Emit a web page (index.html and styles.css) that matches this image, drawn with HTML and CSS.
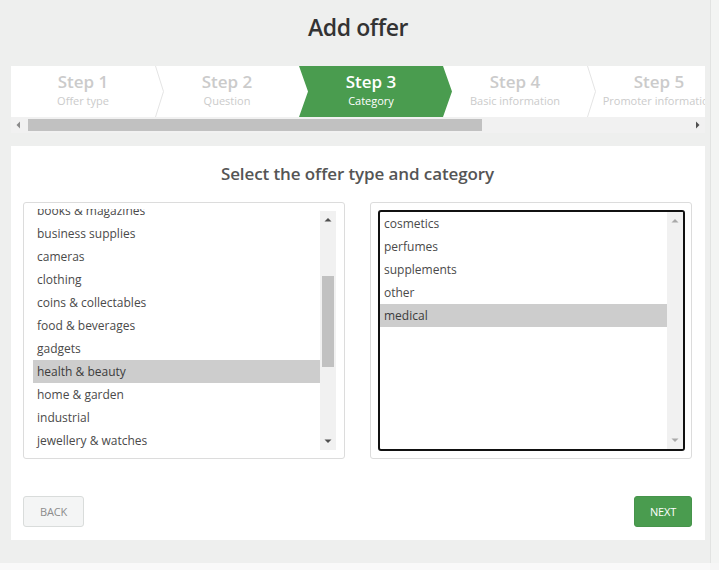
FILE: index.html
```html
<!DOCTYPE html>
<html lang="en">
<head>
<meta charset="utf-8">
<title>Add offer</title>
<link rel="stylesheet" href="styles.css">
</head>
<body>
<div class="app">
  <main class="main">
    <h1 class="title">Add offer</h1>

    <div class="wizard">
      <div class="steps">
        <div class="step">
          <div class="step-title">Step 1</div>
          <div class="step-sub">Offer type</div>
          <svg class="sep" width="9" height="51" viewBox="0 0 9 51"><polyline points="0.5,0 8.5,25.5 0.5,51" fill="none" stroke="#e4e4e4" stroke-width="1"/></svg>
        </div>
        <div class="step">
          <div class="step-title">Step 2</div>
          <div class="step-sub">Question</div>
        </div>
        <div class="step active">
          <div class="step-title">Step 3</div>
          <div class="step-sub">Category</div>
        </div>
        <div class="step">
          <div class="step-title">Step 4</div>
          <div class="step-sub">Basic information</div>
          <svg class="sep" width="9" height="51" viewBox="0 0 9 51"><polyline points="0.5,0 8.5,25.5 0.5,51" fill="none" stroke="#e4e4e4" stroke-width="1"/></svg>
        </div>
        <div class="step">
          <div class="step-title">Step 5</div>
          <div class="step-sub">Promoter information</div>
        </div>
      </div>
      <div class="hscroll">
        <svg class="harrow" width="7" height="8" viewBox="0 0 7 8"><polygon points="5,0.5 5,7.5 1.5,4" fill="#8a8a8a"/></svg>
        <div class="htrack"><div class="hthumb"></div></div>
        <svg class="harrow" width="7" height="8" viewBox="0 0 7 8"><polygon points="2,0.5 2,7.5 5.5,4" fill="#505050"/></svg>
      </div>
    </div>

    <section class="card">
      <h2 class="card-title">Select the offer type and category</h2>
      <div class="panels">
        <div class="panel">
          <div class="select">
            <ul class="options shifted">
              <li>books &amp; magazines</li>
              <li>business supplies</li>
              <li>cameras</li>
              <li>clothing</li>
              <li>coins &amp; collectables</li>
              <li>food &amp; beverages</li>
              <li>gadgets</li>
              <li class="selected">health &amp; beauty</li>
              <li>home &amp; garden</li>
              <li>industrial</li>
              <li>jewellery &amp; watches</li>
            </ul>
            <div class="vtrack left-track">
              <svg class="varrow" width="16" height="10" viewBox="0 0 16 10"><polygon points="4.5,6.5 11.5,6.5 8,3" fill="#505050"/></svg>
              <div class="vbar"><div class="vthumb"></div></div>
              <svg class="varrow" width="16" height="10" viewBox="0 0 16 10"><polygon points="4.5,3.5 11.5,3.5 8,7" fill="#505050"/></svg>
            </div>
          </div>
        </div>
        <div class="panel">
          <div class="select focused">
            <ul class="options">
              <li>cosmetics</li>
              <li>perfumes</li>
              <li>supplements</li>
              <li>other</li>
              <li class="selected">medical</li>
            </ul>
            <div class="vtrack right-track">
              <svg class="varrow" width="16" height="10" viewBox="0 0 16 10"><polygon points="4.5,6.5 11.5,6.5 8,3" fill="#a9a9a9"/></svg>
              <div class="vbar"></div>
              <svg class="varrow" width="16" height="10" viewBox="0 0 16 10"><polygon points="4.5,3.5 11.5,3.5 8,7" fill="#a9a9a9"/></svg>
            </div>
          </div>
        </div>
      </div>
      <div class="actions">
        <button class="btn btn-back" type="button">BACK</button>
        <button class="btn btn-next" type="button">NEXT</button>
      </div>
    </section>
  </main>
  <div class="vstrip"></div>
  <div class="hstrip"></div>
  <div class="corner"></div>
</div>
</body>
</html>
```

FILE: styles.css
```css
* { box-sizing: border-box; }

html, body {
  margin: 0;
  padding: 0;
}

body {
  background: #eeefee;
  font-family: "Open Sans", "Noto Sans", sans-serif;
  color: #444;
  width: 719px;
  height: 570px;
  overflow: hidden;
}

.app {
  display: grid;
  grid-template-columns: 710px 9px;
  grid-template-rows: 563px 7px;
  width: 719px;
  height: 570px;
}

.main {
  padding: 0 5px 0 11px;
  overflow: hidden;
}

.vstrip {
  background: #f3f4f3;
  border-left: 1px solid #e2e3e2;
}

.hstrip {
  background: #f9f9f9;
}

.corner {
  background: #f6f6f6;
}

.title {
  margin: 11px 0 23px;
  height: 32px;
  line-height: 32px;
  text-align: center;
  font-size: 23px;
  font-weight: 600;
  color: #333;
  letter-spacing: -0.4px;
}

/* wizard steps */
.wizard {
  width: 694px;
}

.steps {
  display: flex;
  height: 51px;
  background: #fff;
  overflow: hidden;
}

.step {
  flex: 0 0 144px;
  position: relative;
  text-align: center;
  color: #cbcbcb;
  white-space: nowrap;
}

.step-title,
.step-sub {
  position: relative;
  z-index: 1;
}

.step-title {
  padding-top: 6px;
  height: 26px;
  line-height: 20px;
  font-size: 17px;
  font-weight: 600;
}

.step-sub {
  margin-top: 1px;
  line-height: 15px;
  font-size: 11px;
}

.step .sep {
  position: absolute;
  top: 0;
  left: 100%;
  z-index: 2;
}

.step.active {
  color: #fff;
}

.step.active::before {
  content: "";
  position: absolute;
  top: 0;
  bottom: 0;
  left: 0;
  width: 153px;
  background: #4a9c4f;
  clip-path: polygon(0 0, 144px 0, 153px 50%, 144px 100%, 0 100%, 9px 50%);
}

.hscroll {
  display: flex;
  align-items: center;
  height: 16px;
  background: #f1f1f1;
}

.harrow {
  flex: 0 0 auto;
  margin: 0 4px;
}

.htrack {
  flex: 1;
  height: 16px;
  display: flex;
  align-items: center;
  padding-left: 2px;
}

.hthumb {
  width: 454px;
  height: 12px;
  background: #c1c1c1;
}

/* card */
.card {
  margin-top: 13px;
  width: 694px;
  height: 394px;
  background: #fff;
  padding: 15px 13px 13px 12px;
  display: flex;
  flex-direction: column;
}

.card-title {
  margin: 0;
  height: 26px;
  line-height: 26px;
  text-align: center;
  font-size: 17px;
  font-weight: 600;
  color: #555;
  letter-spacing: -0.1px;
}

.panels {
  margin-top: 15px;
  display: flex;
  gap: 25px;
}

.panel {
  width: 322px;
  height: 257px;
  border: 1px solid #dcdcdc;
  border-radius: 3px;
  padding: 6px 8px 8px 9px;
  display: flex;
}

.panel + .panel {
  padding: 7px 6px 7px 7px;
}

.select {
  flex: 1;
  display: flex;
  overflow: hidden;
  background: #fff;
}

.select.focused {
  border: 2px solid #111;
  border-radius: 3px;
}

.options {
  list-style: none;
  margin: 0;
  padding: 0;
  flex: 1;
  overflow: hidden;
  font-size: 12px;
  color: #4a4a4a;
}

.options.shifted {
  margin-top: -10px;
}

.options li {
  height: 23px;
  line-height: 24px;
  padding-left: 4px;
  white-space: nowrap;
}

.options li.selected {
  background: #cdcdcd;
  color: #3c3c3c;
}

.vtrack {
  flex: 0 0 16px;
  display: flex;
  flex-direction: column;
  align-items: center;
  background: #f1f1f1;
}

.left-track {
  margin-top: 2px;
}

.varrow {
  flex: 0 0 auto;
  margin: 4px 0 3px;
}

.vtrack .varrow:last-child {
  margin: 3px 0 4px;
}

.vbar {
  flex: 1;
  width: 16px;
  position: relative;
}

.vthumb {
  margin: 48px auto 0;
  width: 12px;
  height: 91px;
  background: #c1c1c1;
}

/* buttons */
.actions {
  margin-top: auto;
  display: flex;
  justify-content: space-between;
}

.btn {
  height: 31px;
  border-radius: 3px;
  font-family: "Open Sans", "Noto Sans", sans-serif;
  font-size: 11px;
  letter-spacing: -0.2px;
  cursor: pointer;
}

.btn-back {
  width: 61px;
  background: #f4f5f5;
  border: 1px solid #d9dcdb;
  color: #8c8c8c;
}

.btn-next {
  width: 58px;
  background: #4a9c4f;
  border: 1px solid #46944b;
  color: #fff;
}
```
